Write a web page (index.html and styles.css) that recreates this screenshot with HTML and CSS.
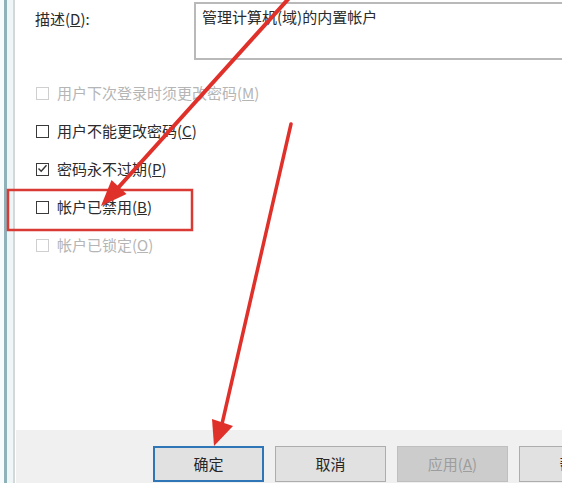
FILE: index.html
```html
<!DOCTYPE html>
<html lang="zh-CN">
<head>
<meta charset="utf-8">
<title>属性</title>
<link rel="stylesheet" href="styles.css">
</head>
<body>
<div class="window">
  <div class="frame"></div>
  <div class="main">
    <div class="panel">
      <div class="desc-row">
        <div class="label">描述(<u>D</u>):</div>
        <div class="textbox">管理计算机(域)的内置帐户</div>
      </div>
      <div class="checks">
        <div class="check-row disabled"><span class="box"></span><span class="text">用户下次登录时须更改密码(<u>M</u>)</span></div>
        <div class="check-row"><span class="box"></span><span class="text">用户不能更改密码(<u>C</u>)</span></div>
        <div class="check-row"><span class="box checked"><svg viewBox="0 0 13 13" width="13" height="13"><path d="M2.5 6.5 L5.2 9.3 L10.5 3.2" fill="none" stroke="#333" stroke-width="1.4"/></svg></span><span class="text">密码永不过期(<u>P</u>)</span></div>
        <div class="check-row"><span class="box"></span><span class="text">帐户已禁用(<u>B</u>)</span></div>
        <div class="check-row disabled"><span class="box"></span><span class="text">帐户已锁定(<u>O</u>)</span></div>
      </div>
    </div>
    <div class="footer">
      <button class="btn default">确定</button>
      <button class="btn">取消</button>
      <button class="btn" disabled>应用(<u>A</u>)</button>
      <button class="btn">帮助</button>
    </div>
  </div>

  <!-- red markup drawn over the dialog -->
  <svg class="markup" viewBox="0 0 562 483" width="562" height="483">
    <rect x="8" y="190" width="184" height="40" fill="none" stroke="#d93a33" stroke-width="2.5"/>
    <path d="M291,-4 Q208,88 117,189" fill="none" stroke="#e0302a" stroke-width="4" stroke-linecap="round"/>
    <polygon points="101,206 126.5,194 111.5,180" fill="#e0302a"/>
    <path d="M291,124 Q279,178 222,424" fill="none" stroke="#e0302a" stroke-width="3.5" stroke-linecap="round"/>
    <polygon points="214,446 233,426 212,419" fill="#e0302a"/>
  </svg>
</div>
</body>
</html>
```

FILE: styles.css
```css
html, body {
  margin: 0;
  padding: 0;
}

body {
  width: 562px;
  height: 483px;
  overflow: hidden;
  background: #ffffff;
  font-family: "Noto Sans CJK SC", "Microsoft YaHei", sans-serif;
  font-size: 15px;
  color: #2b2b2b;
}

.window {
  position: relative;
  display: flex;
  height: 483px;
}

/* window edge: outer blue-grey line, then the tab page border */
.frame {
  flex: none;
  width: 16px;
  background: linear-gradient(to right,
    #f7fbfb 0 4px,
    #8fb1ba 4px 7px,
    #eef6f8 7px 13px,
    #d4d8d9 13px 15px,
    #ffffff 15px);
}

.main {
  flex: 1;
  display: flex;
  flex-direction: column;
  min-width: 0;
}

.panel {
  height: 430px;
  flex: none;
  background: #ffffff;
  padding-left: 19px;
  box-sizing: border-box;
  overflow: hidden;
}

.desc-row {
  display: flex;
  align-items: flex-start;
  margin-top: 2px;
}

.label {
  flex: none;
  width: 159px;
  padding-top: 7px;
  line-height: 20px;
}

.textbox {
  flex: none;
  width: 420px;
  height: 58px;
  box-sizing: border-box;
  border: 2px solid #b9b9b9;
  border-right: none;
  padding: 3px 6px;
  line-height: 20px;
  background: #ffffff;
}

.checks {
  margin-top: 14px;
  display: flex;
  flex-direction: column;
}

.check-row {
  height: 38px;
  display: flex;
  align-items: center;
  gap: 8px;
}

.box {
  flex: none;
  width: 13px;
  height: 13px;
  margin-left: 1px;
  box-sizing: border-box;
  border: 1.5px solid #3a3a3a;
  background: #ffffff;
  position: relative;
}

.box svg {
  position: absolute;
  left: -1.5px;
  top: -1.5px;
}

.text {
  line-height: 20px;
}

.check-row.disabled {
  color: #b5b5b5;
}

.check-row.disabled .box {
  border-color: #cfcfcf;
}

.footer {
  flex: 1;
  background: #f0f0f0;
  display: flex;
  align-items: flex-start;
  gap: 11px;
  padding: 16px 0 0 137px;
  overflow: hidden;
}

.btn {
  flex: none;
  width: 111px;
  height: 36px;
  box-sizing: border-box;
  border: 1px solid #adadad;
  background: #e1e1e1;
  font-family: inherit;
  font-size: 15px;
  color: #262626;
  padding: 0;
  line-height: 20px;
}

.btn.default {
  border: 2px solid #2e76b5;
}

.btn:disabled {
  background: #cccccc;
  border-color: #bfbfbf;
  color: #9d9d9d;
}

.btn u {
  text-decoration: underline;
}

.markup {
  position: absolute;
  left: 0;
  top: 0;
  pointer-events: none;
}
```
